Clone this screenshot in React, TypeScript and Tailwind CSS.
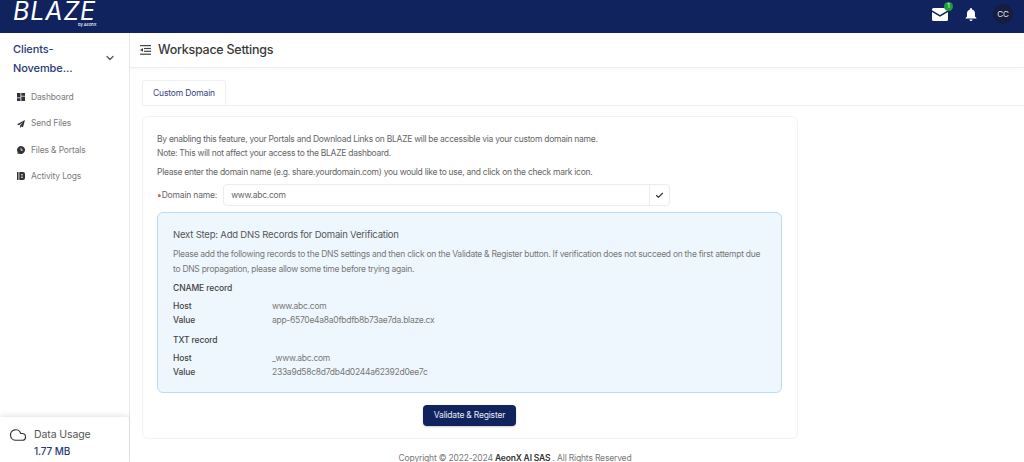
import React from "react";
import { Check, ChevronDown, Cloud } from "lucide-react";

const Nav = ({ icon, label }: { icon: React.ReactNode; label: string }) => (
  <div className="flex h-[26.4px] items-center pl-[17px]">
    <span className="flex w-[14px] items-center justify-start text-[#333]">{icon}</span>
    <span className="text-[8.5px] tracking-[-0.15px] text-[#7b7b7b]">{label}</span>
  </div>
);

const Row = ({ k, v }: { k: string; v: string }) => (
  <div className="flex h-[14px] items-center">
    <span className="w-[99px] text-[8.5px] font-medium tracking-[-0.1px] text-[#444]">{k}</span>
    <span className="text-[8.5px] tracking-[-0.27px] text-[#777]">{v}</span>
  </div>
);

export default function App() {
  return (
    <div className="flex h-[462px] w-[1024px] flex-col overflow-hidden bg-white font-['Inter',sans-serif] text-[8.5px] tracking-[-0.27px]">
      <header className="flex h-[33px] shrink-0 items-start justify-between bg-[#10235f] pl-[13px] pr-[11px]">
        <div className="w-[90px]">
          <div className="text-[25px] font-normal italic leading-[22px] tracking-[0.9px] text-white">BLAZE</div>
          <div className="mt-[0px] pl-[65px] text-[4px] font-medium leading-[5px] tracking-normal text-white">by AeonX</div>
        </div>
        <div className="flex items-center pt-[4px]">
          <div className="relative mr-[17px]">
            <svg width="16" height="13" viewBox="0 0 16 13" fill="white" className="block">
              <path d="M1.5 0h13A1.5 1.5 0 0 1 16 1.5v.7L8 7 0 2.2v-.7A1.5 1.5 0 0 1 1.5 0z" />
              <path d="M0 4l8 4.8L16 4v7.5a1.5 1.5 0 0 1-1.5 1.5h-13A1.5 1.5 0 0 1 0 11.5z" />
            </svg>
            <span className="absolute -right-[5px] -top-[6px] flex h-[9px] w-[9px] items-center justify-center rounded-full bg-[#1f9d3a] text-[6px] leading-none tracking-normal text-white">1</span>
          </div>
          <svg width="12" height="13" viewBox="0 0 12 13" fill="white" className="mr-[16px] block">
            <path d="M6 0a1 1 0 0 1 1 1v.5c2 .5 3 2 3 4v3l1.500 1.500v.5H.5V10L2 8.500v-3c0-2 1-3.500 3-4V1a1 1 0 0 1 1-1z" />
            <path d="M4.500 11.500h3a1.500 1.500 0 0 1-3 0z" />
          </svg>
          <div className="flex h-[20px] w-[20px] items-center justify-center rounded-full bg-[#161d3f] text-[8px] tracking-normal text-[#e8e8e8]">CC</div>
        </div>
      </header>
      <div className="flex min-h-0 flex-1">
        <aside className="flex w-[130px] shrink-0 flex-col justify-between border-r border-[#e8e8e8] bg-white">
          <div>
            <div className="flex items-start pl-[13px] pt-[7px]">
              <div className="w-[91px] text-[11px] font-medium leading-[18.500px] tracking-[-0.1px] text-[#27397a]">
                Clients-<br />Novembe...
              </div>
              <ChevronDown size={12} strokeWidth={2.5} className="mt-[12px] text-[#555]" />
            </div>
            <div className="mt-[7px]">
              <Nav label="Dashboard" icon={<svg width="8" height="8" viewBox="0 0 8 8" fill="currentColor"><rect width="3.500" height="4.500" /><rect y="5.200" width="3.500" height="2.800" /><rect x="4.300" width="3.700" height="2.800" /><rect x="4.300" y="3.500" width="3.700" height="4.500" /></svg>} />
              <Nav label="Send Files" icon={<svg width="8" height="8" viewBox="0 0 8 8" fill="currentColor"><path d="M8 0L0 4.200l2 1 4-3.200-3 3.700V8l1.400-1.500L6 7.300z" /></svg>} />
              <Nav label="Files & Portals" icon={<svg width="8" height="8" viewBox="0 0 8 8"><path fill="currentColor" d="M4 0a4 4 0 1 1-2.100 7.400L.3 8l.5-1.700A4 4 0 0 1 4 0z" /><path d="M4 2v2.200h1.800" stroke="white" strokeWidth=".8" fill="none" /></svg>} />
              <Nav label="Activity Logs" icon={<svg width="8" height="8" viewBox="0 0 8 8" fill="currentColor"><path d="M0 0h1.500v8H0zM2.300 0H6a2 2 0 0 1 2 2v4a2 2 0 0 1-2 2H2.300z" /><path d="M4 2.500h2M4 4h2M4 5.500h2" stroke="white" strokeWidth=".6" /></svg>} />
            </div>
          </div>
          <div className="flex h-[45px] items-start rounded-tr-[3px] bg-white pl-[9px] pt-[9px] shadow-[0_-1px_6px_rgba(0,0,0,0.12)]">
            <Cloud size={18} strokeWidth={1.6} className="text-[#333]" />
            <div className="ml-[7px] pt-[2px]">
              <div className="text-[10.500px] leading-[14px] tracking-[-0.1px] text-[#555]">Data Usage</div>
              <div className="mt-[2px] text-[10px] font-medium leading-[14px] tracking-[-0.1px] text-[#27397a]">1.77 MB</div>
            </div>
          </div>
        </aside>
        <main className="flex min-w-0 flex-1 flex-col bg-white">
          <div className="flex h-[35px] shrink-0 items-center border-b border-[#eeeeee] bg-white pl-[10px] shadow-[0_1px_2px_rgba(0,0,0,0.03)]">
            <svg width="11" height="10" viewBox="0 0 11 10" fill="#444" className="block">
              <rect width="11" height="1.200" />
              <rect x="4" y="2.900" width="7" height="1.200" />
              <rect x="4" y="5.700" width="7" height="1.200" />
              <rect y="8.600" width="11" height="1.200" />
              <path d="M0 4.900L3 3v3.800z" />
            </svg>
            <h1 className="ml-[7px] text-[12.500px] font-medium tracking-[-0.25px] text-[#3a3a3a]">Workspace Settings</h1>
          </div>
          <div className="pl-[12px] pt-[12px]">
            <div className="flex border-b border-[#f0f0f0]">
              <div className="flex h-[25px] w-[84px] items-center justify-center rounded-t-[4px] border border-b-0 border-[#f0f0f0] bg-white text-[8.5px] tracking-[-0.15px] text-[#33437f]">Custom Domain</div>
            </div>
            <section className="mt-[10px] h-[323px] w-[656px] rounded-[6px] border border-[#f3f3f3] bg-white pl-[14px] pt-[15px]">
              <p className="leading-[14px] text-[#666]">By enabling this feature, your Portals and Download Links on BLAZE will be accessible via your custom domain name.</p>
              <p className="leading-[14px] text-[#666]">Note: This will not affect your access to the BLAZE dashboard.</p>
              <p className="mt-[5px] leading-[14px] text-[#666]">Please enter the domain name (e.g. share.yourdomain.com) you would like to use, and click on the check mark icon.</p>
              <div className="mt-[5px] flex items-center">
                <span className="mr-[6px] tracking-[-0.17px] text-[#666]"><span className="text-[#e5484d]">•</span>Domain name:</span>
                <div className="flex h-[22px] w-[447px] rounded-[4px] border border-[#ececec]">
                  <div className="flex flex-1 items-center pl-[7px] text-[#666]">www.abc.com</div>
                  <div className="flex w-[20px] items-center justify-center border-l border-[#ececec]">
                    <Check size={9} strokeWidth={3} className="text-[#333]" />
                  </div>
                </div>
              </div>
              <div className="mt-[6px] h-[181px] w-[625px] rounded-[6px] border border-[#bcdcf5] bg-[#eff7fe] pl-[15px] pr-[12px] pt-[15px]">
                <h2 className="text-[9.5px] leading-[14px] tracking-[-0.2px] text-[#555]">Next Step: Add DNS Records for Domain Verification</h2>
                <p className="mt-[5px] leading-[14.500px] text-[#777]">Please add the following records to the DNS settings and then click on the Validate &amp; Register button. If verification does not succeed on the first attempt due to DNS propagation, please allow some time before trying again.</p>
                <h3 className="mt-[5px] font-medium leading-[14px] tracking-[-0.1px] text-[#444]">CNAME record</h3>
                <div className="mt-[4px]">
                  <Row k="Host" v="www.abc.com" />
                  <Row k="Value" v="app-6570e4a8a0fbdfb8b73ae7da.blaze.cx" />
                </div>
                <h3 className="mt-[6px] font-medium leading-[14px] tracking-[-0.1px] text-[#444]">TXT record</h3>
                <div className="mt-[4px]">
                  <Row k="Host" v="_www.abc.com" />
                  <Row k="Value" v="233a9d58c8d7db4d0244a62392d0ee7c" />
                </div>
              </div>
              <div className="mt-[12px] flex w-[625px] justify-center">
                <button className="h-[21px] w-[93px] rounded-[4px] bg-[#10235f] text-[8.5px] tracking-[-0.2px] text-[#e8eaf2] shadow-[0_1px_2px_rgba(0,0,0,0.2)]">Validate &amp; Register</button>
              </div>
            </section>
            <footer className="mt-[14px] w-[746px] text-center text-[8.5px] leading-[10px] tracking-[-0.17px] text-[#777]">
              Copyright © 2022-2024 <b className="font-semibold text-[#333]">AeonX AI SAS</b> . All Rights Reserved
            </footer>
          </div>
        </main>
      </div>
    </div>
  );
}
